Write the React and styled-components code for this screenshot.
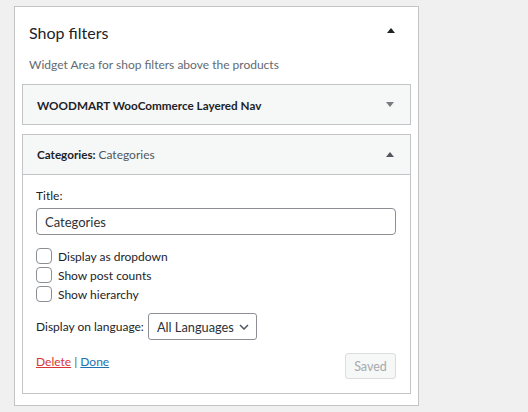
import React from "react";
import styled, { createGlobalStyle } from "styled-components";

const GlobalStyle = createGlobalStyle`
  body {
    margin: 0;
    background: #f0f0f1;
    font-family: "Lato", "Noto Sans", sans-serif;
    color: #1d2327;
  }
`;

const Page = styled.div`
  padding: 6px 0 0 14px;
`;

const Sidebar = styled.div`
  box-sizing: border-box;
  width: 405px;
  height: 400px;
  background: #fff;
  border: 1px solid #c3c4c7;
  padding: 0 7px;
`;

const SidebarHead = styled.div`
  display: flex;
  align-items: center;
  justify-content: space-between;
  height: 50px;
  padding: 0 16px 0 7px;
`;

const SidebarTitle = styled.h2`
  margin: 0;
  font-size: 16px;
  font-weight: 400;
`;

const Description = styled.p`
  margin: 0 7px 11px;
  font-size: 12px;
  color: #646970;
  line-height: 16px;
`;

const Arrow = styled.span`
  width: 0;
  height: 0;
  border-left: 4px solid transparent;
  border-right: 4px solid transparent;
  ${(p) =>
    p.$down
      ? `border-top: 5px solid ${p.$color};`
      : `border-bottom: 5px solid ${p.$color};`}
`;

const HeadArrow = styled(Arrow)`
  margin-bottom: 4px;
`;

const Widget = styled.div`
  border: 1px solid #c3c4c7;
  background: #fff;
  & + & {
    margin-top: 9px;
  }
`;

const WidgetHead = styled.div`
  display: flex;
  align-items: center;
  justify-content: space-between;
  height: 39px;
  padding: 0 16px 0 14px;
  background: #f6f7f7;
  ${(p) => p.$open && `border-bottom: 1px solid #c3c4c7;`}
`;

const WidgetTitle = styled.span`
  font-size: 11.7px;
  font-weight: 700;
  color: #1d2327;
`;

const InTitle = styled.span`
  font-weight: 400;
  color: #50575e;
  font-size: 12px;
`;

const WidgetBody = styled.div`
  padding: 12px 14px 14px 13px;
  font-size: 12px;
`;

const Label = styled.div`
  line-height: 18px;
  margin-bottom: 3px;
`;

const TextInput = styled.input`
  box-sizing: border-box;
  width: 100%;
  height: 27px;
  border: 1px solid #8c8f94;
  border-radius: 4px;
  padding: 0 8px;
  font-family: inherit;
  font-size: 13px;
  color: #2c3338;
  outline: none;
`;

const Checks = styled.div`
  display: flex;
  flex-direction: column;
  gap: 3px;
  margin-top: 13px;
`;

const CheckRow = styled.label`
  display: flex;
  align-items: center;
  gap: 6px;
  height: 16px;
`;

const Box = styled.span`
  box-sizing: border-box;
  width: 16px;
  height: 16px;
  border: 1px solid #8c8f94;
  border-radius: 4px;
  background: #fff;
`;

const LangRow = styled.div`
  display: flex;
  align-items: center;
  gap: 4px;
  margin-top: 11px;
`;

const Select = styled.div`
  box-sizing: border-box;
  display: flex;
  align-items: center;
  gap: 5px;
  height: 27px;
  padding: 0 7px 0 8px;
  border: 1px solid #8c8f94;
  border-radius: 3px;
  font-size: 12.8px;
  color: #2c3338;
`;

const Actions = styled.div`
  display: flex;
  justify-content: space-between;
  align-items: flex-start;
  margin-top: 13px;
`;

const Links = styled.div`
  padding-top: 1px;
  color: #50575e;
`;

const Link = styled.a`
  color: ${(p) => p.$color};
  text-decoration: underline;
`;

const SavedButton = styled.button`
  box-sizing: border-box;
  width: 51px;
  height: 26px;
  border: 1px solid #dcdcde;
  border-radius: 3px;
  background: #f6f7f7;
  color: #a7aaad;
  font-family: inherit;
  font-size: 12.5px;
  padding: 0;
`;

const Chevron = () => (
  <svg width="10" height="6" viewBox="0 0 10 6">
    <path d="M1 1l4 4 4-4" fill="none" stroke="#50575e" strokeWidth="1.5" />
  </svg>
);

const App = () => {
  return (
    <Page>
      <GlobalStyle />
      <Sidebar>
        <SidebarHead>
          <SidebarTitle>Shop filters</SidebarTitle>
          <HeadArrow $color="#1d2327" />
        </SidebarHead>
        <Description>Widget Area for shop filters above the products</Description>
        <Widget>
          <WidgetHead>
            <WidgetTitle>WOODMART WooCommerce Layered Nav</WidgetTitle>
            <Arrow $down $color="#787c82" />
          </WidgetHead>
        </Widget>
        <Widget>
          <WidgetHead $open>
            <WidgetTitle>
              Categories: <InTitle>Categories</InTitle>
            </WidgetTitle>
            <Arrow $color="#50575e" />
          </WidgetHead>
          <WidgetBody>
            <Label>Title:</Label>
            <TextInput defaultValue="Categories" />
            <Checks>
              <CheckRow><Box />Display as dropdown</CheckRow>
              <CheckRow><Box />Show post counts</CheckRow>
              <CheckRow><Box />Show hierarchy</CheckRow>
            </Checks>
            <LangRow>
              Display on language:
              <Select>
                All Languages
                <Chevron />
              </Select>
            </LangRow>
            <Actions>
              <Links>
                <Link $color="#d63638">Delete</Link> | <Link $color="#2271b1">Done</Link>
              </Links>
              <SavedButton>Saved</SavedButton>
            </Actions>
          </WidgetBody>
        </Widget>
      </Sidebar>
    </Page>
  );
};

export default App;
